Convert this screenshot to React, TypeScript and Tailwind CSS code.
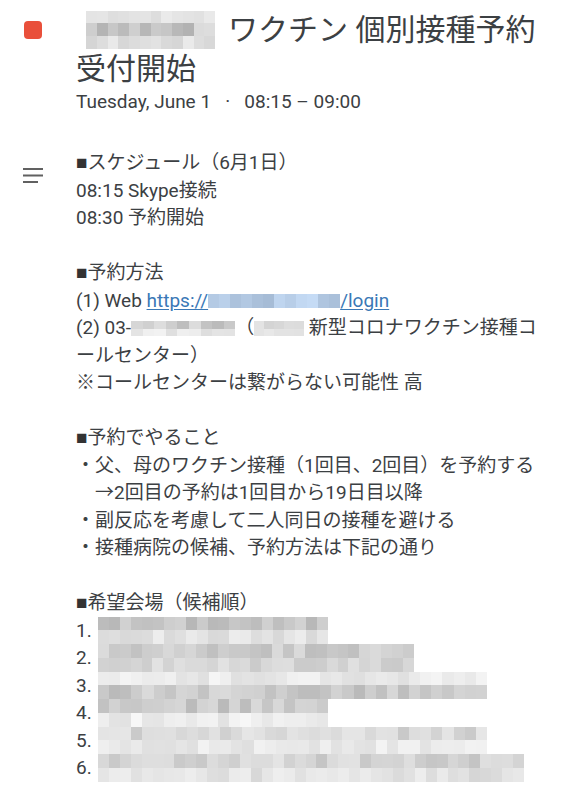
function rng(seed: number) {
  let s = seed;
  return () => {
    s = (s * 9301 + 49297) % 233280;
    return s / 233280;
  };
}

type Band = [number, number];

// pixelated "blurred" block, colours picked from a seeded generator
function Mosaic({
  cols,
  bands,
  seed,
  blue = false,
  className = "",
}: {
  cols: number;
  bands: Band[];
  seed: number;
  blue?: boolean;
  className?: string;
}) {
  const r = rng(seed);
  return (
    <span className={`inline-flex flex-col align-middle ${className}`}>
      {bands.map(([lo, hi], i) => (
        <span key={i} className="flex flex-1">
          {Array.from({ length: cols }, (_, j) => {
            const v = Math.round(lo + (hi - lo) * r());
            const bg = blue
              ? `rgb(${v - 40}, ${v - 18}, ${Math.min(255, v + 8)})`
              : `rgb(${v}, ${v}, ${v})`;
            return <span key={j} className="flex-1" style={{ backgroundColor: bg }} />;
          })}
        </span>
      ))}
    </span>
  );
}

const venues: { width: string; cols: number; bands: Band[] }[] = [
  { width: "w-[230px]", cols: 21, bands: [[180, 212], [215, 238]] },
  { width: "w-[316px]", cols: 29, bands: [[190, 222], [200, 230]] },
  { width: "w-[389px]", cols: 35, bands: [[222, 245], [185, 218]] },
  { width: "w-[230px]", cols: 21, bands: [[185, 218], [226, 248]] },
  { width: "w-[389px]", cols: 35, bands: [[200, 230], [222, 245]] },
  { width: "w-[426px]", cols: 39, bands: [[195, 228], [212, 238]] },
];

function Square() {
  return <span className="font-['Liberation_Sans'] text-[#333]">■</span>;
}

function Blank() {
  return <div className="h-[27.5px]" />;
}

export default function App() {
  return (
    <div className="min-h-[800px] w-[570px] bg-white font-[Roboto,'Noto_Sans_CJK_JP',sans-serif] text-[#3c4043]">
      <div className="flex pt-[10px]">
        <div className="w-[76px] shrink-0 pl-[24px] pt-[11px]">
          <div className="size-[18px] rounded-[4px] bg-[#e9503b]" />
        </div>
        <div>
          <div className="text-[30px] leading-[39px] whitespace-nowrap">
            <div className="flex h-[39px] items-center gap-[13px]">
              <Mosaic
                cols={12}
                seed={7}
                bands={[[220, 236], [176, 222], [210, 234]]}
                className="ml-[10px] h-[38px] w-[129px]"
              />
              <span>ワクチン 個別接種予約</span>
            </div>
            <div>受付開始</div>
          </div>
          <div className="text-[19px] leading-[27.5px] whitespace-pre">
            {"Tuesday, June 1   ·   08:15 – 09:00"}
          </div>
        </div>
      </div>

      <div className="mt-[33.5px] flex">
        <div className="w-[76px] shrink-0 pl-[23px] pt-[19px]">
          <svg width="20" height="15" viewBox="0 0 20 15" fill="#616161">
            <rect x="0" y="0" width="20" height="2" />
            <rect x="0" y="6.5" width="20" height="2" />
            <rect x="0" y="13" width="15" height="2" />
          </svg>
        </div>

        <div className="text-[19px] leading-[27.5px] whitespace-nowrap">
          <div>
            <Square />
            スケジュール（6月1日）
          </div>
          <div>08:15 Skype接続</div>
          <div>08:30 予約開始</div>
          <Blank />

          <div>
            <Square />
            予約方法
          </div>
          <div>
            (1) Web{" "}
            <span className="text-[#3a78b6] underline underline-offset-2">https://</span>
            <Mosaic cols={12} seed={31} blue bands={[[205, 238]]} className="h-[14px] w-[132px]" />
            <span className="text-[#3a78b6] underline underline-offset-2">/login</span>
          </div>
          <div>
            (2) 03-
            <Mosaic cols={9} seed={13} bands={[[185, 225], [220, 245]]} className="h-[15px] w-[104px]" />
            （
            <Mosaic cols={5} seed={19} bands={[[190, 228], [222, 245]]} className="h-[15px] w-[50px]" />{" "}
            新型コロナワクチン接種コ
          </div>
          <div>ールセンター）</div>
          <div>※コールセンターは繋がらない可能性 高</div>
          <Blank />

          <div>
            <Square />
            予約でやること
          </div>
          <div>・父、母のワクチン接種（1回目、2回目）を予約する</div>
          <div>　→2回目の予約は1回目から19日目以降</div>
          <div>・副反応を考慮して二人同日の接種を避ける</div>
          <div>・接種病院の候補、予約方法は下記の通り</div>
          <Blank />

          <div>
            <Square />
            希望会場（候補順）
          </div>
          {venues.map((v, i) => (
            <div key={i} className="flex h-[27.5px] items-stretch">
              <span className="w-[22px]">{i + 1}.</span>
              <Mosaic cols={v.cols} seed={101 + i * 17} bands={v.bands} className={`h-full ${v.width}`} />
            </div>
          ))}
        </div>
      </div>
    </div>
  );
}
